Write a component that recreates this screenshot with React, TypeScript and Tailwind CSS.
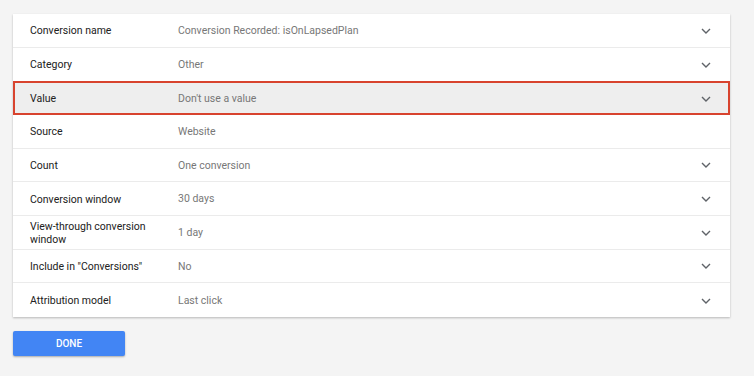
const rows: { label: string; value: string; chevron: boolean; selected?: boolean }[] = [
  { label: "Conversion name", value: "Conversion Recorded: isOnLapsedPlan", chevron: true },
  { label: "Category", value: "Other", chevron: true },
  { label: "Value", value: "Don't use a value", chevron: true, selected: true },
  { label: "Source", value: "Website", chevron: false },
  { label: "Count", value: "One conversion", chevron: true },
  { label: "Conversion window", value: "30 days", chevron: true },
  { label: "View-through conversion window", value: "1 day", chevron: true },
  { label: 'Include in "Conversions"', value: "No", chevron: true },
  { label: "Attribution model", value: "Last click", chevron: true },
];

function Chevron() {
  return (
    <svg width="10" height="6" viewBox="0 0 10 6" className="text-[#5f6368]">
      <path d="M1 1l4 4 4-4" fill="none" stroke="currentColor" strokeWidth="1.4" />
    </svg>
  );
}

export default function App() {
  return (
    <div className="min-h-[376px] w-[754px] bg-[#f4f4f4] pl-[13px] pt-[14px] font-['Roboto',sans-serif] text-[10.5px]">
      <div className="w-[717px] bg-white shadow-[0_1px_2px_rgba(0,0,0,0.25)]">
        {rows.map((r, i) => (
          <div
            key={r.label}
            className={
              r.selected
                ? "flex h-[33.67px] items-center border-2 border-[#d8432e] bg-[#eeeeee] pl-[15px] pr-[16px] pt-[1px]"
                : `flex h-[33.67px] items-center pl-[17px] pr-[18px] pt-[1px] ${i < rows.length - 1 && !rows[i + 1]?.selected ? "border-b border-[#ebebeb]" : ""}`
            }
          >
            <div className="w-[148px] flex-none pr-[10px] leading-[13px] text-[#212121]">{r.label}</div>
            <div className="flex-1 text-[#777777]">{r.value}</div>
            <div className="flex w-[12px] justify-center">{r.chevron && <Chevron />}</div>
          </div>
        ))}
      </div>
      <button
        type="button"
        className="mt-[14px] h-[25px] w-[112px] rounded-[2px] bg-[#4285f4] text-[10px] font-medium text-white shadow-[0_1px_2px_rgba(0,0,0,0.3)]"
      >
        DONE
      </button>
    </div>
  );
}
